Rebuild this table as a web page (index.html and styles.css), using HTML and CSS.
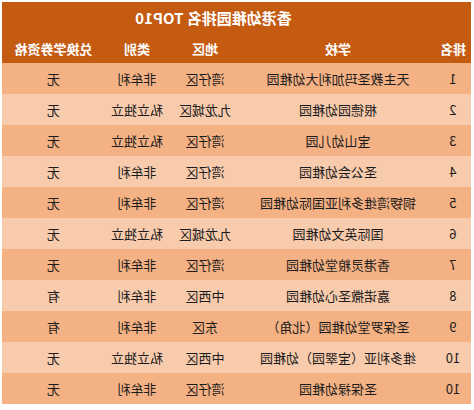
FILE: index.html
```html
<!DOCTYPE html>
<html lang="zh">
<head>
<meta charset="utf-8">
<link rel="stylesheet" href="styles.css">
</head>
<body>
<div class="mirror">
  <table class="rank">
    <colgroup>
      <col class="c-rank"><col class="c-school"><col class="c-area"><col class="c-type"><col class="c-voucher">
    </colgroup>
    <thead>
      <tr class="title-row"><th colspan="5" class="title">香港幼稚园排名 TOP10</th></tr>
      <tr class="head-row"><th>排名</th><th>学校</th><th>地区</th><th>类别</th><th>兑换学券资格</th></tr>
    </thead>
    <tbody>
      <tr class="dark"><td>1</td><td>天主教圣玛加利大幼稚园</td><td>湾仔区</td><td>非牟利</td><td>无</td></tr>
      <tr class="light"><td>2</td><td>根德园幼稚园</td><td>九龙城区</td><td>私立独立</td><td>无</td></tr>
      <tr class="dark"><td>3</td><td>宝山幼儿园</td><td>湾仔区</td><td>私立独立</td><td>无</td></tr>
      <tr class="light"><td>4</td><td>圣公会幼稚园</td><td>湾仔区</td><td>非牟利</td><td>无</td></tr>
      <tr class="dark"><td>5</td><td>铜锣湾维多利亚国际幼稚园</td><td>湾仔区</td><td>非牟利</td><td>无</td></tr>
      <tr class="light"><td>6</td><td>国际英文幼稚园</td><td>九龙城区</td><td>私立独立</td><td>无</td></tr>
      <tr class="dark"><td>7</td><td>香港灵粮堂幼稚园</td><td>湾仔区</td><td>非牟利</td><td>无</td></tr>
      <tr class="light"><td>8</td><td>嘉诺撒圣心幼稚园</td><td>中西区</td><td>非牟利</td><td>有</td></tr>
      <tr class="dark"><td>9</td><td>圣保罗堂幼稚园（北角）</td><td>东区</td><td>非牟利</td><td>有</td></tr>
      <tr class="light"><td>10</td><td>维多利亚（宝翠园）幼稚园</td><td>中西区</td><td>私立独立</td><td>无</td></tr>
      <tr class="dark"><td>10</td><td>圣保禄幼稚园</td><td>湾仔区</td><td>非牟利</td><td>无</td></tr>
    </tbody>
  </table>
</div>
</body>
</html>
```

FILE: styles.css
```css
html, body {
  margin: 0;
  padding: 0;
  background: #ffffff;
}
body {
  width: 474px;
  height: 410px;
  overflow: hidden;
  font-family: "Noto Sans CJK SC", "Noto Sans", sans-serif;
  color: #1c1c1c;
}
.mirror {
  width: 474px;
  padding: 2px 0 0 3px;
  box-sizing: border-box;
  transform: scaleX(-1);
}
.rank {
  width: 469px;
  border-collapse: collapse;
  table-layout: fixed;
}
.c-rank { width: 36px; }
.c-school { width: 194px; }
.c-area { width: 72px; }
.c-type { width: 64px; }
.c-voucher { width: 103px; }
.rank th, .rank td {
  padding: 0;
  text-align: center;
  white-space: nowrap;
  font-size: 13px;
}
.title-row th {
  height: 31px;
  background: #c55a11;
  color: #fff;
  font-size: 15px;
  font-weight: bold;
  padding-left: 46px;
}
.head-row th {
  height: 30px;
  background: #c55a11;
  color: #fff;
  font-weight: bold;
}
.rank td {
  height: 31px;
}
.dark td { background: #f4b183; }
.light td { background: #f8cbad; }
```
